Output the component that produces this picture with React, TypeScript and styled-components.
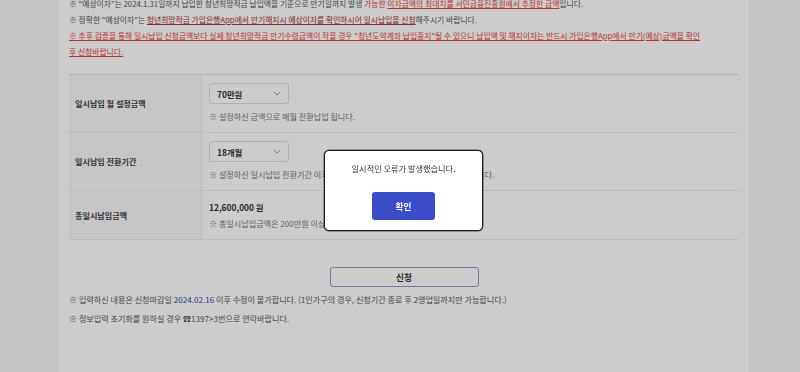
import React from "react";
import styled, { createGlobalStyle } from "styled-components";

const Global = createGlobalStyle`
  html, body { margin: 0; padding: 0; }
  body {
    background: #f5f5f7;
    font-family: "Noto Sans CJK KR", "Noto Sans", sans-serif;
    color: #444;
    overflow: hidden;
  }
`;

const Page = styled.div`
  display: flex;
  padding-left: 58px;
  height: 372px;
  overflow: hidden;
`;

const Content = styled.div`
  width: 691px;
  background: #ffffff;
  padding: 0 10px 0 11px;
  box-sizing: border-box;
  font-size: 8.1px;
`;

const Notices = styled.div`
  margin-top: -4px;
  font-size: 7.8px;
`;

const Para = styled.p`
  margin: 0;
  line-height: 16px;
  color: #555;
  white-space: nowrap;
`;

const Red = styled.span<{ $u?: boolean; $dark?: boolean }>`
  color: ${(p) => (p.$dark ? "#a83232" : "#e83c3c")};
  text-decoration: ${(p) => (p.$u ? "underline" : "none")};
  text-underline-offset: 1px;
`;

const Table = styled.div`
  margin-top: 14px;
  display: grid;
  grid-template-columns: 133px 1fr;
  border-top: 1px solid #dedede;
`;

const Label = styled.div<{ $h: number }>`
  height: ${(p) => p.$h}px;
  box-sizing: border-box;
  background: #f8f8f8;
  border-right: 1px solid #ececec;
  border-bottom: 1px solid #ececec;
  display: flex;
  align-items: center;
  padding-left: 6px;
  font-weight: 700;
  color: #444;
`;

const Value = styled.div<{ $h: number }>`
  height: ${(p) => p.$h}px;
  box-sizing: border-box;
  border-bottom: 1px solid #ececec;
  padding: 8px 7px 0;
  display: flex;
  flex-direction: column;
  align-items: flex-start;
`;

const Select = styled.div`
  width: 80px;
  height: 21px;
  box-sizing: border-box;
  border: 1px solid #dcdcdc;
  border-radius: 3px;
  background: #fff;
  display: flex;
  align-items: center;
  justify-content: space-between;
  padding: 0 7px 0 7px;
  font-weight: 700;
  font-size: 8.4px;
  color: #333;
`;

const Note = styled.div<{ $mt: number }>`
  margin-top: ${(p) => p.$mt}px;
  line-height: 14px;
  color: #777;
  white-space: nowrap;
`;

const Amount = styled.div`
  line-height: 14px;
  margin-top: 1px;
  font-weight: 700;
  color: #333;
  font-size: 8.4px;
`;

const ButtonRow = styled.div`
  display: flex;
  justify-content: center;
  margin-top: 27px;
`;

const ApplyButton = styled.button`
  width: 149px;
  height: 20px;
  border: 1px solid #9494c0;
  border-radius: 3px;
  background: #fff;
  font-family: inherit;
  font-size: 8.6px;
  font-weight: 700;
  color: #333;
  padding: 0;
`;

const Footer = styled.div`
  margin-top: 5px;
  display: flex;
  flex-direction: column;
  gap: 3px;
`;

const Blue = styled.span`
  color: #3440a8;
`;

const Overlay = styled.div`
  position: fixed;
  inset: 0;
  background: rgba(0, 0, 0, 0.2);
`;

const Modal = styled.div`
  position: fixed;
  left: 324px;
  top: 150px;
  width: 159px;
  height: 81px;
  box-sizing: border-box;
  background: #fff;
  border: 1px solid #1e1e1e;
  border-radius: 5px;
  box-shadow: 0 0 0 0.5px #555;
  display: flex;
  flex-direction: column;
  align-items: center;
  padding-top: 10px;
  font-size: 8.2px;
  color: #333;
`;

const ModalText = styled.div`
  line-height: 14px;
`;

const ConfirmButton = styled.button`
  margin-top: 17px;
  width: 63px;
  height: 28px;
  border: none;
  border-radius: 3px;
  background: #3b4cc8;
  color: #fff;
  font-family: inherit;
  font-size: 8.6px;
  font-weight: 700;
  padding: 0;
`;

const Chevron = () => (
  <svg width="8" height="5" viewBox="0 0 8 5" fill="none">
    <path d="M1 1l3 3 3-3" stroke="#999" strokeWidth="1" strokeLinecap="round" strokeLinejoin="round" />
  </svg>
);

export default function App() {
  return (
    <>
      <Global />
      <Page>
        <Content>
          <Notices>
            <Para>
              ※ "예상이자"는 2024.1.31일까지 납입한 청년희망적금 납입액을 기준으로 만기일까지 발생 <Red>가능한 </Red>
              <Red $u>이자금액의 최대치를 서민금융진흥원에서 추정한 금액</Red>입니다.
            </Para>
            <Para>
              ※ 정확한 "예상이자"는 <Red $u $dark>청년희망적금 가입은행App에서 만기해지시 예상이자를 확인하시어 일시납입을 신청</Red>해주시기 바랍니다.
            </Para>
            <Para>
              <Red $u>
                ※ 추후 검증을 통해 일시납입 신청금액보다 실제 청년희망적금 만기수령금액이 작을 경우 "청년도약계좌 납입중지"될 수 있으니 납입액 및 해지이자는 반드시 가입은행App에서 만기(예상)금액을 확인
              </Red>
              <br />
              <Red $u>후 신청바랍니다.</Red>
            </Para>
          </Notices>

          <Table>
            <Label $h={58}>일시납입 월 설정금액</Label>
            <Value $h={58}>
              <Select>
                <span>70만원</span>
                <Chevron />
              </Select>
              <Note $mt={6}>※ 설정하신 금액으로 매월 전환납입 됩니다.</Note>
            </Value>

            <Label $h={58}>일시납입 전환기간</Label>
            <Value $h={58}>
              <Select>
                <span>18개월</span>
                <Chevron />
              </Select>
              <Note $mt={6}>※ 설정하신 일시납입 전환기간 이후에는 청년도약계좌에 자유롭게 납입이 가능합니다.</Note>
            </Value>

            <Label $h={49}>총일시납입금액</Label>
            <Value $h={49}>
              <Amount>12,600,000 원</Amount>
              <Note $mt={3}>※ 총일시납입금액은 200만원 이상이어야 합니다.</Note>
            </Value>
          </Table>

          <ButtonRow>
            <ApplyButton>신청</ApplyButton>
          </ButtonRow>

          <Footer>
            <Para>
              ※ 입력하신 내용은 신청마감일 <Blue>2024.02.16</Blue> 이후 수정이 불가합니다. (1인가구의 경우, 신청기간 종료 후 2영업일까지만 가능합니다.)
            </Para>
            <Para>※ 정보입력 초기화를 원하실 경우 ☎1397&gt;3번으로 연락바랍니다.</Para>
          </Footer>
        </Content>
      </Page>
      <Overlay />
      <Modal>
        <ModalText>일시적인 오류가 발생했습니다.</ModalText>
        <ConfirmButton>확인</ConfirmButton>
      </Modal>
    </>
  );
}
